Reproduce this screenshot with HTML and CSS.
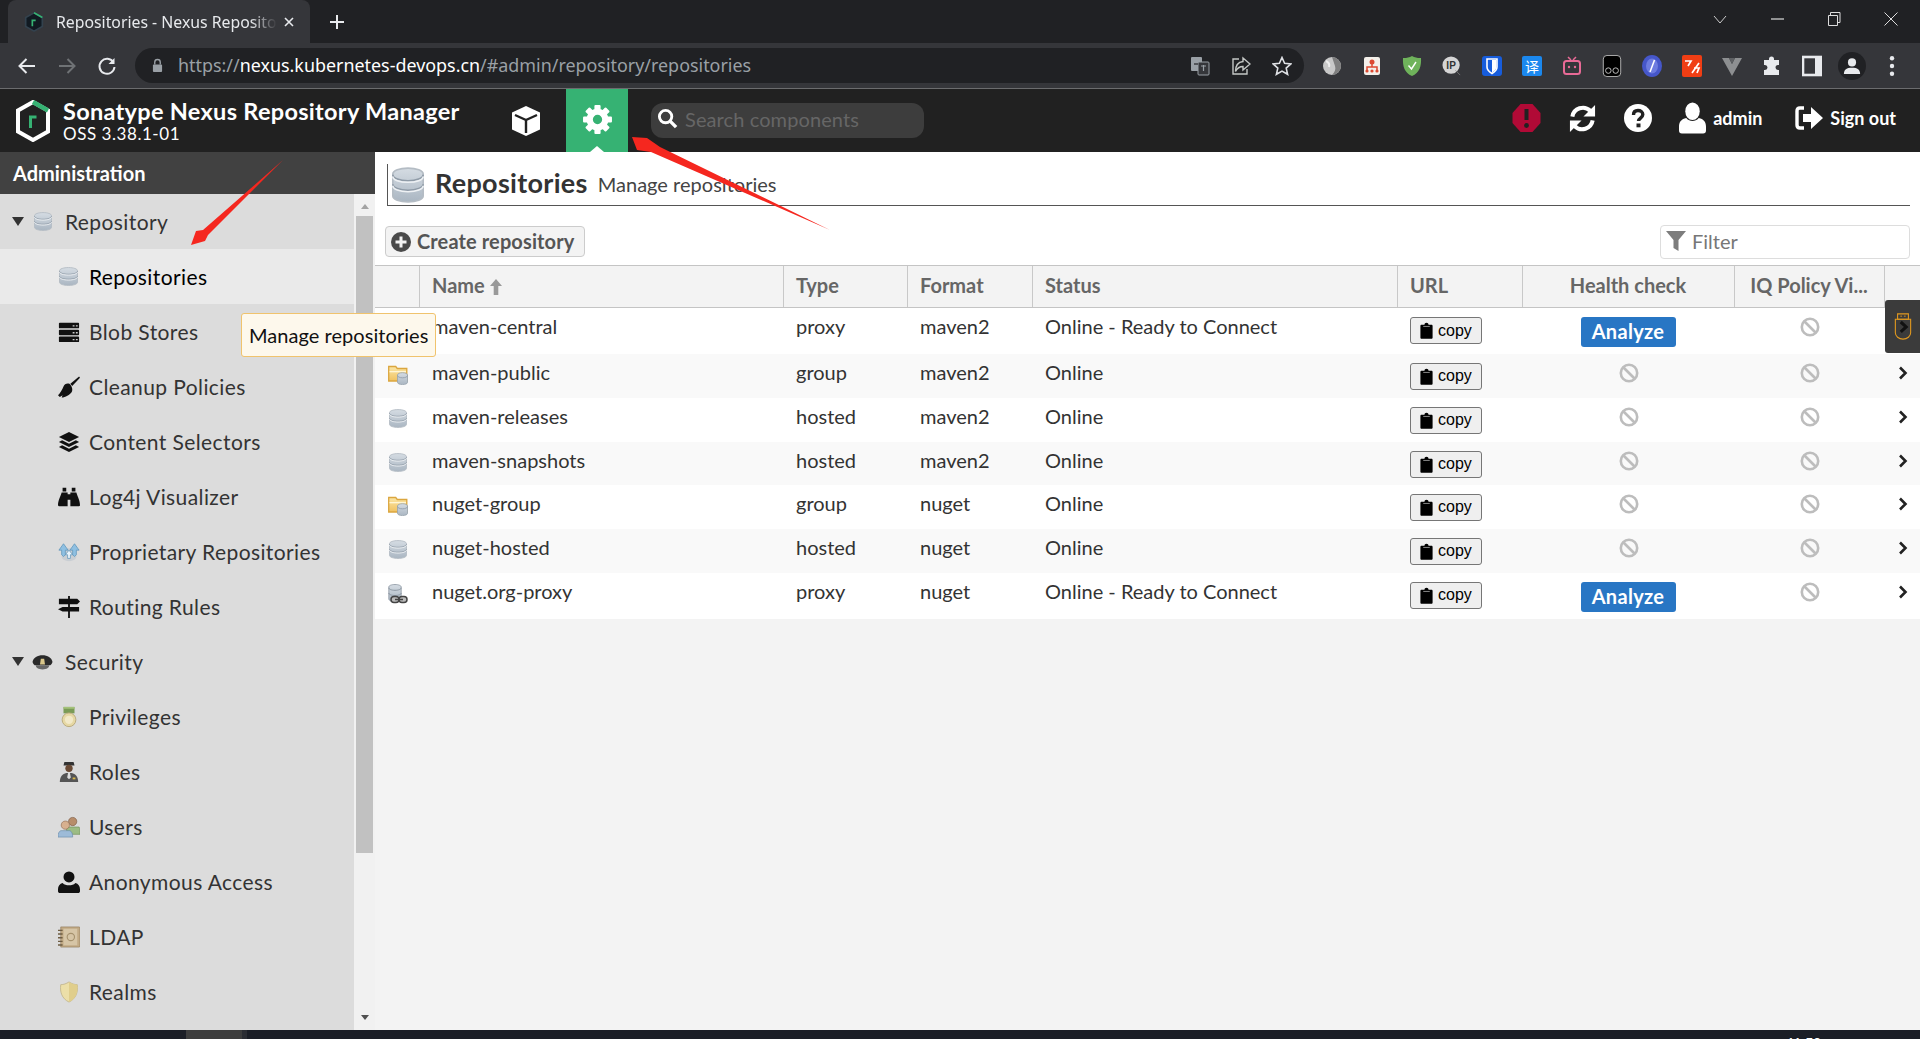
FILE: index.html
```html
<!DOCTYPE html>
<html lang="en">
<head>
<meta charset="utf-8">
<title>Repositories - Nexus Repository Manager</title>
<link rel="stylesheet" href="styles.css">
</head>
<body>
<svg class="defs" aria-hidden="true">
  <defs>
    <linearGradient id="gdb" x1="0" x2="0" y1="0" y2="1"><stop offset="0" stop-color="#d5dce3"/><stop offset="1" stop-color="#aab6c2"/></linearGradient>
    <linearGradient id="gfolder" x1="0" x2="0" y1="0" y2="1"><stop offset="0" stop-color="#fbe6a6"/><stop offset="1" stop-color="#f0c261"/></linearGradient>
    <symbol id="i-db" viewBox="2.500 .5 19 23" preserveAspectRatio="none">
      <path d="M3 5c0-2.200 4-3.800 9-3.800s9 1.600 9 3.800v14c0 2.200-4 3.800-9 3.800s-9-1.600-9-3.800z" fill="url(#gdb)" stroke="#b4bcc4"/>
      <path d="M3 5.500c0 2.200 4 3.800 9 3.800s9-1.600 9-3.800M3 11.500c0 2.200 4 3.800 9 3.800s9-1.600 9-3.800" fill="none" stroke="#8f9ba7" stroke-width="1"/>
      <path d="M3 6.500c0 2.200 4 3.800 9 3.800s9-1.600 9-3.800M3 12.500c0 2.200 4 3.800 9 3.800s9-1.600 9-3.800" fill="none" stroke="#eef1f4" stroke-width="1"/>
    </symbol>
    <symbol id="i-group" viewBox="0 0 20 20">
      <path d="M.7 1.500h7l1.600 2h9.500v12.500H.7z" fill="url(#gfolder)" stroke="#dba63f" stroke-width="1.300"/>
      <path d="M1.500 6h16.500v1.300H1.500z" fill="#fff6d5"/>
      <path d="M9.500 10c0-1.300 2.200-2.300 5-2.300s5 1 5 2.300v7.300c0 1.300-2.200 2.300-5 2.300s-5-1-5-2.300z" fill="url(#gdb)" stroke="#97a3ae" stroke-width=".8"/>
      <path d="M9.500 10.500c0 1.300 2.200 2.300 5 2.300s5-1 5-2.300" fill="none" stroke="#8f9ba7" stroke-width=".8"/>
    </symbol>
    <symbol id="i-proxy" viewBox="0 0 20 20">
      <path d="M.8 3c0-1.500 2.700-2.500 6.200-2.500s6.200 1 6.200 2.500v12c0 1.500-2.700 2.500-6.200 2.500S.8 16.500.8 15z" fill="url(#gdb)" stroke="#8b96a1" stroke-width=".8"/>
      <path d="M.8 3.800c0 1.500 2.700 2.500 6.200 2.500s6.200-1 6.200-2.500M.8 9c0 1.500 2.700 2.500 6.200 2.500s6.200-1 6.200-2.500" fill="none" stroke="#7f8a95" stroke-width=".8"/>
      <rect x="3" y="12.500" width="8" height="6" rx="3" fill="#bbb" stroke="#444" stroke-width="1.500"/>
      <rect x="11" y="12.500" width="8" height="6" rx="3" fill="#bbb" stroke="#444" stroke-width="1.500"/>
      <path d="M7 15.500h8" stroke="#444" stroke-width="1.500"/>
    </symbol>
    <symbol id="i-blob" viewBox="0 0 24 24">
      <rect x="1" y="2" width="22" height="6" rx="1"/><rect x="1" y="9.500" width="22" height="6" rx="1"/><rect x="1" y="17" width="22" height="6" rx="1"/>
      <path d="M16 4.500h2v1.500h-2zM19.500 4.500h2v1.500h-2zM16 12h2v1.500h-2zM19.500 12h2v1.500h-2zM16 19.500h2V21h-2zM19.500 19.500h2V21h-2z" fill="#ccc"/>
    </symbol>
    <symbol id="i-broom" viewBox="0 0 24 24">
      <path d="M23 .5 13.500 8.500l2 2.500 8.500-9z"/>
      <path d="M12.500 8.500c-3-1-5.500.5-6.500 3-1.500 4-3.500 7-6 9.500l2 2 3-2-1 2.500c4 0 9-3 11-6 1.500-2.500 0-7-2.500-9z"/>
    </symbol>
    <symbol id="i-layers" viewBox="0 0 24 24">
      <path d="M12 1 1 6.500 12 12l11-5.500z"/>
      <path d="M4.500 10 1 12l11 5.500L23 12l-3.500-2-7.500 3.800z"/>
      <path d="M4.500 15.500 1 17.500 12 23l11-5.500-3.500-2-7.500 3.800z"/>
    </symbol>
    <symbol id="i-binoc" viewBox="0 0 24 24">
      <path d="M5 2h4v4H5zM15 2h4v4h-4z"/>
      <path d="M4 7h6.500v15H1c-.5 0-1-.5-1-1 0-5 2-8 4-14zM20 7h-6.500v15H23c.5 0 1-.5 1-1 0-5-2-8-4-14zM10.500 9h3v6h-3z"/>
    </symbol>
    <symbol id="i-prop" viewBox="0 0 24 24">
      <path d="M4 17c0 3 3.500 5 8 5s8-2 8-5V8H4z" fill="#c9ced3"/>
      <path d="M1 10 6 3l5 7H8v5l-2 2-2-2v-5z" fill="#8fc0e2" stroke="#5b93b9" stroke-width=".8"/>
      <path d="M23 10 18 3l-5 7h3v5l2 2 2-2v-5z" fill="#8fc0e2" stroke="#5b93b9" stroke-width=".8"/>
      <path d="M12 10l-4 5h2.500v4h3v-4H16z" fill="#eaf4fb" stroke="#5b93b9" stroke-width=".8"/>
    </symbol>
    <symbol id="i-sign" viewBox="0 0 24 24">
      <path d="M11 0h2v3h8l3 3-3 3h-8v3h10v5H5l-5-2.500L5 12h6V9H1V3h10zM11 17h2v7h-2z"/>
    </symbol>
    <symbol id="i-hat" viewBox="0 0 24 24">
      <path d="M12 4C6 4 1 7 0 12c1 3 2 4 4 4h16c2 0 3-1 4-4-1-5-6-8-12-8z" fill="#2a2a2a"/>
      <path d="M4 16h16c0 3-3 5-8 5s-8-2-8-5z" fill="#666"/>
      <path d="M10 8h4l1 7H9z" fill="#d9c68a"/>
    </symbol>
    <symbol id="i-medal" viewBox="0 0 24 24">
      <path d="M6 1h12v7H6z" fill="#7a9b56"/><path d="M6 1h12v2H6z" fill="#a4c27a"/>
      <circle cx="12" cy="15" r="7.500" fill="#e6d8a4" stroke="#b8a878"/><circle cx="12" cy="15" r="4.500" fill="#f2e9c8"/>
    </symbol>
    <symbol id="i-police" viewBox="0 0 24 24">
      <path d="M7 1h10l1 4H6z" fill="#333"/><circle cx="12" cy="8" r="4" fill="#6a4a35"/>
      <path d="M2 23c0-6 3-9 7-10h6c4 1 7 4 7 10z" fill="#555"/><path d="M11 13h2l1 5-2 2-2-2z" fill="#ddd"/><path d="M16 18h3v2h-3z" fill="#d9b84a"/>
    </symbol>
    <symbol id="i-users" viewBox="0 0 24 24">
      <circle cx="16" cy="6" r="4.500" fill="#b78d6b" stroke="#7c5b43" stroke-width=".7"/><path d="M9 12h14c1 1 1 6 1 8H10z" fill="#9cbc84" stroke="#6f8e57" stroke-width=".7"/>
      <circle cx="8" cy="10" r="4.500" fill="#d7b08f" stroke="#8e6c52" stroke-width=".7"/><path d="M0 23c0-4 1-6 3-7h10c2 1 3 3 3 7z" fill="#9dbbd8" stroke="#688aab" stroke-width=".7"/>
    </symbol>
    <symbol id="i-person" viewBox="0 0 24 24">
      <circle cx="12" cy="6.500" r="6"/><path d="M5 13c2 2 4 2.500 7 2.500s5-.5 7-2.500c3 1 5 3 5 7v2c0 1-1 2-2 2H2c-1 0-2-1-2-2v-2c0-4 2-6 5-7z"/>
    </symbol>
    <symbol id="i-book" viewBox="0 0 24 24">
      <path d="M3 1h20c.5 0 1 .5 1 1v20c0 .5-.5 1-1 1H3z" fill="#c2ab86" stroke="#8e7957" stroke-width=".7"/>
      <path d="M6 3h15v18H6z" fill="#d6c5a6"/>
      <path d="M0 4h5v1.500H0zM0 8h5v1.500H0zM0 12h5v1.500H0zM0 16h5v1.500H0zM0 20h5v1.500H0z" fill="#6e5d43"/>
      <circle cx="14" cy="12" r="4" fill="none" stroke="#a5916d" stroke-width="1.200"/>
    </symbol>
    <symbol id="i-shield" viewBox="0 0 24 24">
      <path d="M12 1c3 2 6 3 9 3 1 8-1 15-9 19C4 19 2 12 3 4c3 0 6-1 9-3z" fill="#ecdfa8" stroke="#c4b88f"/>
      <path d="M12 1v22c8-4 10-11 9-19-3 0-6-1-9-3z" fill="#e0ce8c"/>
    </symbol>
    <symbol id="i-clip" viewBox="0 0 16 20">
      <path d="M2 3h3.500c0-1.500 1-2.500 2.500-2.500s2.500 1 2.500 2.500H14c1 0 1.500.7 1.500 1.500v14c0 1-.5 1.500-1.500 1.500H2c-1 0-1.500-.5-1.500-1.500v-14C.5 3.700 1 3 2 3z" fill="#000"/>
      <path d="M4 5h8" stroke="#888" stroke-width="1.200"/>
    </symbol>
    <symbol id="i-ban" viewBox="0 0 20 20">
      <circle cx="10" cy="10" r="8.200" fill="none" stroke="#bdbdbd" stroke-width="2.600"/>
      <path d="M4.500 4.500l11 11" stroke="#bdbdbd" stroke-width="2.600"/>
    </symbol>
    <symbol id="i-chev" viewBox="0 0 10 14">
      <path d="M2 1.500 7.500 7 2 12.500" fill="none" stroke="#222" stroke-width="2.600"/>
    </symbol>
  </defs>
</svg>

<div class="tabstrip">
  <div class="tab">
    <svg class="favicon" viewBox="0 0 24 24"><path d="M12 1 22 6.500v11L12 23 2 17.500v-11z" fill="#111a22" stroke="#33424e" stroke-width="2"/><path d="M12 1 22 6.500" stroke="#36b273" stroke-width="2"/><path d="M10 17v-7h4" fill="none" stroke="#36b273" stroke-width="2"/></svg>
    <span class="tab-title">Repositories - Nexus Repositor</span>
    <svg class="tab-x" viewBox="0 0 12 12"><path d="M2 2l8 8M10 2l-8 8" stroke="#e8eaed" stroke-width="1.600"/></svg>
  </div>
  <svg class="tab-plus" viewBox="0 0 16 16"><path d="M8 1v14M1 8h14" stroke="#e8eaed" stroke-width="2"/></svg>
  <div class="winctl">
    <svg viewBox="0 0 14 14"><path d="M1 4l6 7 6-7" fill="none" stroke="#ccc"/></svg>
    <svg viewBox="0 0 14 14"><path d="M1 7h13" stroke="#ddd" stroke-width="1.200"/></svg>
    <svg viewBox="0 0 14 14"><path d="M1.500 3.500h9v10h-9zM3.500 3.500V.5h9.500v10h-2.500" fill="none" stroke="#ddd"/></svg>
    <svg viewBox="0 0 14 14"><path d="M.5.500l13 13M13.500.500l-13 13" stroke="#ddd" stroke-width="1"/></svg>
  </div>
</div>

<div class="toolbar">
  <div class="navbtn"><svg viewBox="0 0 20 20"><path d="M18 10H3M9.500 3 2.500 10l7 7" fill="none" stroke="#e8eaed" stroke-width="2"/></svg></div>
  <div class="navbtn"><svg viewBox="0 0 20 20"><path d="M2 10h15M10.500 3l7 7-7 7" fill="none" stroke="#6f7275" stroke-width="2"/></svg></div>
  <div class="navbtn"><svg viewBox="0 0 20 20"><path d="M16.500 6.500A7.500 7.500 0 1 0 17.500 11" fill="none" stroke="#e8eaed" stroke-width="2"/><path d="M17.500 2v6h-6z" fill="#e8eaed"/></svg></div>
  <div class="omnibox">
    <svg class="lock" viewBox="0 0 12 16"><path d="M3 7V4.500a3 3 0 0 1 6 0V7" fill="none" stroke="#9aa0a6" stroke-width="1.500"/><rect x="1" y="7" width="10" height="8" rx="1" fill="#9aa0a6"/></svg>
    <span class="url"><span class="url-dim">https://</span>nexus.kubernetes-devops.cn<span class="url-dim">/#admin/repository/repositories</span></span>
    <svg class="omni-i" viewBox="0 0 20 20"><rect x="1" y="1" width="11" height="14" rx="1" fill="#9aa0a6"/><rect x="8" y="6" width="11" height="13" rx="1" fill="#35363a" stroke="#9aa0a6"/><path d="M4 8h4" stroke="#35363a" stroke-width="1.400"/><path d="M11 10h5M13.500 9v6" stroke="#9aa0a6" stroke-width="1.200"/></svg>
    <svg class="omni-i" viewBox="0 0 20 20"><path d="M8 3H2v15h14v-5" fill="none" stroke="#c4c7c5" stroke-width="1.400"/><path d="M12 2l7 6-7 6v-3.500c-4 0-6 2-7.500 5 0-6 3-9.500 7.500-10z" fill="none" stroke="#c4c7c5" stroke-width="1.400"/></svg>
    <svg class="omni-i" viewBox="0 0 20 20"><path d="M10 1.500l2.600 5.800 6.300.6-4.700 4.200 1.400 6.200L10 15.100l-5.600 3.200 1.400-6.200L1.100 7.900l6.300-.6z" fill="none" stroke="#dfe1e5" stroke-width="1.600"/></svg>
  </div>
  <div class="exts">
    <div class="ext"><svg viewBox="0 0 20 20"><circle cx="10" cy="10" r="9" fill="#c8c8c8"/><path d="M10 1a9 9 0 0 1 0 18c3-3 4-6 3-9S11 4 10 1z" fill="#7e7e7e"/><path d="M4 5c2 1 4 3 3 6" stroke="#eee" fill="none" stroke-width="2"/></svg></div>
    <div class="ext"><svg viewBox="0 0 20 20"><rect x="2" y="1" width="16" height="18" rx="2" fill="#f4f0ea"/><circle cx="10" cy="6" r="2.500" fill="#dc4a32"/><path d="M10 8v3M5 15v-4h10v4" fill="none" stroke="#dc4a32" stroke-width="1.500"/><circle cx="5" cy="15" r="1.600" fill="#dc4a32"/><circle cx="10" cy="15" r="1.600" fill="#dc4a32"/><circle cx="15" cy="15" r="1.600" fill="#dc4a32"/></svg></div>
    <div class="ext"><svg viewBox="0 0 20 22"><path d="M10 1c3 1.500 6 2.200 9 2 .5 8-1.500 15-9 18C2.500 18 .5 11 1 3c3 .2 6-.5 9-2z" fill="#6fb35b"/><path d="M6.500 10.500 9.500 14l4.500-7" fill="none" stroke="#fff" stroke-width="1.400"/></svg></div>
    <div class="ext"><svg viewBox="0 0 22 22"><circle cx="10" cy="10" r="9.500" fill="#d5d5d5"/><text x="10" y="14.500" class="ext-ip">IP</text><path d="M15 16l5 5" stroke="#777" stroke-width="1"/></svg></div>
    <div class="ext"><svg viewBox="0 0 20 20"><rect width="20" height="20" rx="3" fill="#175ddc"/><path d="M5 3h10v8c0 3-2.500 5-5 6.500C7.500 16 5 14 5 11z" fill="none" stroke="#fff" stroke-width="1.600"/><path d="M10 4v12.500c2-1.300 4.300-3 4.300-5.500V4z" fill="#fff"/></svg></div>
    <div class="ext"><svg viewBox="0 0 20 20"><rect width="20" height="20" rx="2" fill="#1b88ee"/><text x="10" y="15.500" class="ext-yi">译</text></svg></div>
    <div class="ext"><svg viewBox="0 0 20 20"><path d="M6 1l3 3M14 1l-3 3" stroke="#e86a96" stroke-width="1.500"/><rect x="2" y="5" width="16" height="13" rx="2.500" fill="none" stroke="#e86a96" stroke-width="2"/><circle cx="7" cy="11" r="1.200" fill="#e86a96"/><circle cx="13" cy="11" r="1.200" fill="#e86a96"/></svg></div>
    <div class="ext"><svg viewBox="0 0 20 24"><rect x=".5" y=".5" width="19" height="23" rx="4" fill="#000" stroke="#bbb"/><circle cx="6" cy="17" r="3" fill="none" stroke="#ccc"/><circle cx="14" cy="17" r="3" fill="none" stroke="#ccc"/></svg></div>
    <div class="ext"><svg viewBox="0 0 20 22"><ellipse cx="10" cy="11" rx="10" ry="11" fill="#4657ca"/><ellipse cx="10" cy="11" rx="6" ry="7.500" fill="#6d7ce0"/><path d="M12.500 5 8 17" stroke="#fff" stroke-width="1.600"/></svg></div>
    <div class="ext"><svg viewBox="0 0 20 22"><rect width="20" height="22" rx="2" fill="#f03e14"/><path d="M3 6h6l-3 5M17 8l-7 10M12 13h5l-2 5" fill="none" stroke="#fff" stroke-width="1.700"/></svg></div>
    <div class="ext"><svg viewBox="0 0 20 20"><path d="M0 2h7l3 6 3-6h7L10 20z" fill="#8d8f91"/><path d="M7 2h6l-3 6z" fill="#5e6063"/></svg></div>
    <div class="ext"><svg viewBox="0 0 20 20"><path d="M7 4V3a2.500 2.500 0 0 1 5 0v1h5v5h-1a2.500 2.500 0 0 0 0 5h1v5H2v-5h1a2.500 2.500 0 0 0 0-5H2V4z" fill="#e8eaed"/></svg></div>
    <div class="ext"><svg viewBox="0 0 20 20"><rect x="1" y="1" width="18" height="18" fill="none" stroke="#e8eaed" stroke-width="2.600"/><rect x="13" y="1" width="6" height="18" fill="#e8eaed"/></svg></div>
    <div class="avatar"><svg viewBox="0 0 20 20"><circle cx="10" cy="6" r="4.500" fill="#e8eaed"/><path d="M1 19c0-5 3-7 9-7s9 2 9 7z" fill="#e8eaed"/></svg></div>
    <div class="ext"><svg viewBox="0 0 6 20"><circle cx="3" cy="3" r="2" fill="#e8eaed"/><circle cx="3" cy="10" r="2" fill="#e8eaed"/><circle cx="3" cy="17" r="2" fill="#e8eaed"/></svg></div>
  </div>
</div>

<header class="apphead">
  <svg class="logo" viewBox="0 0 36 42"><path d="M18 2 33 10.500v21L18 40 3 31.500v-21z" fill="none" stroke="#fff" stroke-width="4"/><path d="M18 2 33 10.500" stroke="#36b273" stroke-width="4.500"/><path d="M15.500 28V17h6" fill="none" stroke="#36b273" stroke-width="3"/></svg>
  <div class="brand">
    <div class="brand-name">Sonatype Nexus Repository Manager</div>
    <div class="brand-ver">OSS 3.38.1-01</div>
  </div>
  <svg class="cube" viewBox="0 0 32 32"><path d="M16 1 30 7.500v17L16 31 2 24.500v-17z" fill="#fff"/><path d="M5 10l11 5 11-5M16 15v13" fill="none" stroke="#212121" stroke-width="2.400"/></svg>
  <div class="geartab">
    <svg class="gear" viewBox="0 0 30 30">
      <circle cx="15" cy="15" r="7.500" fill="none" stroke="#fff" stroke-width="6"/>
      <g fill="#fff"><rect x="12" y="1" width="6" height="6" rx="1"/><rect x="12" y="23" width="6" height="6" rx="1"/><rect x="1" y="12" width="6" height="6" rx="1"/><rect x="23" y="12" width="6" height="6" rx="1"/><rect x="12" y="1" width="6" height="6" rx="1" transform="rotate(45 15 15)"/><rect x="12" y="1" width="6" height="6" rx="1" transform="rotate(135 15 15)"/><rect x="12" y="1" width="6" height="6" rx="1" transform="rotate(225 15 15)"/><rect x="12" y="1" width="6" height="6" rx="1" transform="rotate(315 15 15)"/></g>
    </svg>
    <span class="notch"></span>
  </div>
  <div class="search">
    <svg class="search-i" viewBox="0 0 22 22"><circle cx="9" cy="9" r="6.500" fill="none" stroke="#fff" stroke-width="3"/><path d="M13.500 13.500 20 20" stroke="#fff" stroke-width="3.600"/></svg>
    <span class="search-ph">Search components</span>
  </div>
  <div class="headright">
    <svg class="h-alert" viewBox="0 0 28 30"><path d="M8 1h12l8 9v10l-8 9H8l-8-9V10z" fill="#b10a36"/><path d="M14 6v11" stroke="#212121" stroke-width="4"/><circle cx="14" cy="22.500" r="2.400" fill="#212121"/></svg>
    <svg class="h-refresh" viewBox="0 0 30 30"><path d="M4.500 13A11 11 0 0 1 23 7l2.500 3" fill="none" stroke="#fff" stroke-width="4.200"/><path d="M28 1v12H16z" fill="#fff"/><path d="M25.500 17A11 11 0 0 1 7 23l-2.500-3" fill="none" stroke="#fff" stroke-width="4.200"/><path d="M2 29V17h12z" fill="#fff"/></svg>
    <svg class="h-help" viewBox="0 0 28 28"><circle cx="14" cy="14" r="14" fill="#fff"/><path d="M9.500 11c0-3 2-4.500 4.500-4.500s4.800 1.500 4.800 4c0 3.500-4.300 3.500-4.300 6.500" fill="none" stroke="#212121" stroke-width="3.400"/><rect x="12.500" y="19.500" width="4" height="3.800" fill="#212121"/></svg>
    <div class="h-pair">
      <svg class="h-user" viewBox="0 0 28 32"><ellipse cx="14" cy="9" rx="7.500" ry="9" fill="#fff"/><path d="M7.500 16c2 2.500 4 3 6.500 3s4.500-.5 6.500-3c5 1 7.500 4 7.500 9v4c0 2-1 3-3 3H3c-2 0-3-1-3-3v-4c0-5 2.500-8 7.500-9z" fill="#fff"/></svg>
      <span class="h-label">admin</span>
    </div>
    <div class="h-pair h-signout">
      <svg class="h-out" viewBox="0 0 28 26"><path d="M9 3H5C3 3 2 4 2 6v14c0 2 1 3 3 3h4" fill="none" stroke="#fff" stroke-width="3.400"/><path d="M8 9h8V2l12 11-12 11v-7H8z" fill="#fff"/></svg>
      <span class="h-label">Sign out</span>
    </div>
  </div>
</header>

<div class="workspace">
  <aside class="side">
    <div class="side-title">Administration</div>
    <div class="side-body">
      <ul class="tree">
        <li class="node parent"><span class="caret"></span><svg class="ico ico-db"><use href="#i-db"/></svg><span>Repository</span></li>
        <li class="node child active"><svg class="ico ico-db"><use href="#i-db"/></svg><span>Repositories</span></li>
        <li class="node child"><svg class="ico"><use href="#i-blob"/></svg><span>Blob Stores</span></li>
        <li class="node child"><svg class="ico"><use href="#i-broom"/></svg><span>Cleanup Policies</span></li>
        <li class="node child"><svg class="ico"><use href="#i-layers"/></svg><span>Content Selectors</span></li>
        <li class="node child"><svg class="ico"><use href="#i-binoc"/></svg><span>Log4j Visualizer</span></li>
        <li class="node child"><svg class="ico"><use href="#i-prop"/></svg><span>Proprietary Repositories</span></li>
        <li class="node child"><svg class="ico"><use href="#i-sign"/></svg><span>Routing Rules</span></li>
        <li class="node parent"><span class="caret"></span><svg class="ico"><use href="#i-hat"/></svg><span>Security</span></li>
        <li class="node child"><svg class="ico"><use href="#i-medal"/></svg><span>Privileges</span></li>
        <li class="node child"><svg class="ico"><use href="#i-police"/></svg><span>Roles</span></li>
        <li class="node child"><svg class="ico"><use href="#i-users"/></svg><span>Users</span></li>
        <li class="node child"><svg class="ico"><use href="#i-person"/></svg><span>Anonymous Access</span></li>
        <li class="node child"><svg class="ico"><use href="#i-book"/></svg><span>LDAP</span></li>
        <li class="node child"><svg class="ico"><use href="#i-shield"/></svg><span>Realms</span></li>
      </ul>
      <div class="vscroll">
        <span class="sb-up"></span>
        <span class="sb-thumb"></span>
        <span class="sb-down"></span>
      </div>
    </div>
  </aside>

  <main class="content">
    <div class="panel-top">
      <div class="page-head">
        <svg class="page-ico"><use href="#i-db"/></svg>
        <h1 class="page-title">Repositories</h1>
        <span class="page-sub">Manage repositories</span>
      </div>
      <div class="actions">
        <button class="create" type="button">
          <svg class="create-i" viewBox="0 0 20 20"><circle cx="10" cy="10" r="10" fill="#4a4a4a"/><path d="M10 4.500v11M4.500 10h11" stroke="#f3f3f3" stroke-width="3"/></svg>
          <span class="create-t">Create repository</span>
        </button>
        <div class="filter">
          <svg class="filter-i" viewBox="0 0 20 22"><path d="M0 1h20l-7.500 9v11l-5-3v-8z" fill="#7d7d7d"/></svg>
          <span class="filter-ph">Filter</span>
        </div>
      </div>
    </div>
    <table class="grid">
      <colgroup>
        <col class="c-ico"><col class="c-name"><col class="c-type"><col class="c-format"><col class="c-status"><col class="c-url"><col class="c-health"><col class="c-iq"><col class="c-go">
      </colgroup>
      <thead>
        <tr>
          <th></th>
          <th>Name <svg class="sort" viewBox="0 0 12 16"><path d="M6 0l6 7H8.300v9H3.700V7H0z" fill="#999"/></svg></th>
          <th>Type</th><th>Format</th><th>Status</th><th>URL</th>
          <th class="ctr">Health check</th><th class="ctr">IQ Policy Vi...</th><th></th>
        </tr>
      </thead>
      <tbody>
        <tr class="tall"><td><svg class="rowico"><use href="#i-proxy"/></svg></td><td>maven-central</td><td>proxy</td><td>maven2</td><td>Online - Ready to Connect</td>
          <td><button class="copy" type="button"><svg class="clip"><use href="#i-clip"/></svg>copy</button></td><td class="ctr"><button class="analyze" type="button">Analyze</button></td><td class="ctr"><svg class="ban"><use href="#i-ban"/></svg></td><td class="ctr"><svg class="chev"><use href="#i-chev"/></svg></td></tr>
        <tr><td><svg class="rowico"><use href="#i-group"/></svg></td><td>maven-public</td><td>group</td><td>maven2</td><td>Online</td>
          <td><button class="copy" type="button"><svg class="clip"><use href="#i-clip"/></svg>copy</button></td><td class="ctr"><svg class="ban"><use href="#i-ban"/></svg></td><td class="ctr"><svg class="ban"><use href="#i-ban"/></svg></td><td class="ctr"><svg class="chev"><use href="#i-chev"/></svg></td></tr>
        <tr><td><svg class="rowico rowdb"><use href="#i-db"/></svg></td><td>maven-releases</td><td>hosted</td><td>maven2</td><td>Online</td>
          <td><button class="copy" type="button"><svg class="clip"><use href="#i-clip"/></svg>copy</button></td><td class="ctr"><svg class="ban"><use href="#i-ban"/></svg></td><td class="ctr"><svg class="ban"><use href="#i-ban"/></svg></td><td class="ctr"><svg class="chev"><use href="#i-chev"/></svg></td></tr>
        <tr class="short"><td><svg class="rowico rowdb"><use href="#i-db"/></svg></td><td>maven-snapshots</td><td>hosted</td><td>maven2</td><td>Online</td>
          <td><button class="copy" type="button"><svg class="clip"><use href="#i-clip"/></svg>copy</button></td><td class="ctr"><svg class="ban"><use href="#i-ban"/></svg></td><td class="ctr"><svg class="ban"><use href="#i-ban"/></svg></td><td class="ctr"><svg class="chev"><use href="#i-chev"/></svg></td></tr>
        <tr><td><svg class="rowico"><use href="#i-group"/></svg></td><td>nuget-group</td><td>group</td><td>nuget</td><td>Online</td>
          <td><button class="copy" type="button"><svg class="clip"><use href="#i-clip"/></svg>copy</button></td><td class="ctr"><svg class="ban"><use href="#i-ban"/></svg></td><td class="ctr"><svg class="ban"><use href="#i-ban"/></svg></td><td class="ctr"><svg class="chev"><use href="#i-chev"/></svg></td></tr>
        <tr><td><svg class="rowico rowdb"><use href="#i-db"/></svg></td><td>nuget-hosted</td><td>hosted</td><td>nuget</td><td>Online</td>
          <td><button class="copy" type="button"><svg class="clip"><use href="#i-clip"/></svg>copy</button></td><td class="ctr"><svg class="ban"><use href="#i-ban"/></svg></td><td class="ctr"><svg class="ban"><use href="#i-ban"/></svg></td><td class="ctr"><svg class="chev"><use href="#i-chev"/></svg></td></tr>
        <tr class="tall"><td><svg class="rowico"><use href="#i-proxy"/></svg></td><td>nuget.org-proxy</td><td>proxy</td><td>nuget</td><td>Online - Ready to Connect</td>
          <td><button class="copy" type="button"><svg class="clip"><use href="#i-clip"/></svg>copy</button></td><td class="ctr"><button class="analyze" type="button">Analyze</button></td><td class="ctr"><svg class="ban"><use href="#i-ban"/></svg></td><td class="ctr"><svg class="chev"><use href="#i-chev"/></svg></td></tr>
      </tbody>
    </table>
  </main>
</div>

<div class="taskbar">
  <span class="task-a"></span><span class="task-b"></span>
  <span class="clock">11:50</span>
</div>

<div class="tooltip">Manage repositories</div>
<div class="usbwidget"><svg viewBox="0 0 20 30"><path d="M4 1h12v6H4z" fill="none" stroke="#e39a1f" stroke-width="1.200"/><path d="M1.500 7h17v15a8.500 7 0 0 1-17 0z" fill="none" stroke="#e39a1f" stroke-width="1.200"/><path d="M7 3.500h2M11 3.500h2" stroke="#e39a1f"/><path d="M7.500 10l6 5.500-6 5.500" fill="none" stroke="#111" stroke-width="3.400"/></svg></div>
<svg class="marks" viewBox="0 0 1920 1039" aria-hidden="true">
  <polygon points="283,160 208,235 205,241 191,245 196,231 203,230" fill="#f5271f"/>
  <polygon points="830,230 660,147 647,138 632,137 637,150 651,152" fill="#f5271f"/>
</svg>
</body>
</html>
```

FILE: styles.css
```css
* { box-sizing: border-box; }
html, body { margin: 0; height: 100%; overflow: hidden; }
body { font-family: "Lato", "Liberation Sans", sans-serif; color: #333; background: #f3f3f3; width: 1920px; height: 1039px; position: relative; }
ul { list-style: none; margin: 0; padding: 0; }
button { font: inherit; cursor: default; }
svg { display: block; flex: none; }
.defs { width: 0; height: 0; overflow: hidden; }

/* browser chrome */
.tabstrip { height: 43px; background: #202124; display: flex; align-items: flex-start; padding-left: 8px; }
.tab { width: 302px; height: 43px; background: #35363a; border-radius: 8px 8px 0 0; display: flex; align-items: center; padding: 0 14px 0 16px; color: #e8eaed; }
.favicon { width: 20px; height: 24px; margin-right: 12px; }
.tab-title { font: 15.800px "Noto Sans", sans-serif; white-space: nowrap; width: 221px; flex: none; -webkit-mask-image: linear-gradient(to right, #000 88%, transparent 100%); mask-image: linear-gradient(to right, #000 88%, transparent 100%); }
.tab-x { width: 12px; height: 12px; margin-left: 6px; }
.tab-plus { width: 16px; height: 16px; margin: 14px 0 0 19px; }
.winctl { margin-left: auto; display: flex; gap: 43px; padding: 12px 22px 0 0; }
.winctl svg { width: 14px; height: 14px; }

.toolbar { height: 46px; background: #35363a; border-bottom: 1px solid #6b6c6e; display: flex; align-items: flex-start; padding: 5px 8px 0 7px; }
.navbtn { width: 40px; height: 35px; display: flex; align-items: center; justify-content: center; }
.navbtn svg { width: 20px; height: 20px; }
.omnibox { flex: 1; height: 35px; margin: 0 8px; background: #202124; border-radius: 18px; display: flex; align-items: center; padding: 0 12px 0 17px; }
.lock { width: 11px; height: 15px; margin-right: 15px; }
.url { flex: 1; font: 17.900px "Noto Sans", sans-serif; color: #fff; white-space: nowrap; padding-bottom: 2px; }
.url-dim { color: #9aa0a6; }
.omni-i { width: 20px; height: 20px; margin-left: 21px; }
.exts { display: flex; }
.ext { width: 40px; height: 35px; display: flex; align-items: center; justify-content: center; }
.ext svg { width: 20px; height: 22px; }
.ext-ip { font: bold 11px "Liberation Sans", sans-serif; fill: #333; text-anchor: middle; }
.ext-yi { font: 14px "Noto Sans CJK SC", sans-serif; fill: #fff; text-anchor: middle; }
.avatar { width: 28px; height: 28px; margin: 4px 6px 0; border-radius: 50%; background: #202124; display: flex; align-items: center; justify-content: center; }
.avatar svg { width: 18px; height: 18px; }

/* nexus header */
.apphead { height: 63px; background: #212121; display: flex; align-items: center; padding-left: 15px; color: #fff; }
.logo { width: 36px; height: 42px; }
.brand { width: 447px; margin-left: 12px; }
.brand-name { font-size: 23.500px; font-weight: 700; line-height: 28px; letter-spacing: .3px; margin-top: -1px; }
.brand-ver { font-size: 17px; line-height: 18px; letter-spacing: .55px; }
.cube { width: 32px; height: 32px; }
.geartab { position: relative; width: 62px; height: 63px; margin-left: 24px; background: #36b273; display: flex; align-items: center; justify-content: center; padding-bottom: 2px; }
.gear { width: 31px; height: 31px; }
.notch { position: absolute; left: 24px; bottom: 0; border: 7px solid transparent; border-top: 0; border-bottom: 6px solid #fff; }
.search { width: 273px; height: 35px; margin-left: 23px; background: #3d3d3d; border-radius: 12px; display: flex; align-items: center; padding: 0 0 4px 6px; }
.search-i { width: 21px; height: 21px; }
.search-ph { margin-left: 7px; font-size: 20px; color: #666; letter-spacing: .1px; }
.headright { margin-left: auto; display: flex; align-items: center; gap: 27px; padding: 0 24px 5px 0; }
.h-pair { display: flex; align-items: center; gap: 7px; }
.h-signout { margin-left: 6px; }
.h-alert { width: 29px; height: 30px; }
.h-refresh { width: 29px; height: 29px; }
.h-help { width: 28px; height: 28px; }
.h-user { width: 27px; height: 32px; }
.h-out { width: 28px; height: 26px; }
.h-label { font-size: 18px; font-weight: 700; }

/* layout */
.workspace { height: 878px; display: flex; }
.side { width: 375px; display: flex; flex-direction: column; }
.side-title { height: 42px; background: #414141; color: #fff; font-weight: 700; font-size: 20px; line-height: 42px; padding-left: 13px; }
.side-body { flex: 1; display: flex; min-height: 0; }
.tree { width: 354px; background: #dcdcdc; font-size: 21px; letter-spacing: .4px; overflow: hidden; }
.node { height: 55px; display: flex; align-items: center; color: #333; white-space: nowrap; }
.parent { padding-left: 12px; }
.child { padding-left: 58px; }
.caret { width: 0; height: 0; border: 6.500px solid transparent; border-top: 9px solid #333; border-bottom: 0; margin-right: 8px; }
.ico { fill: #111; }
.parent .ico { width: 21px; height: 20px; margin-right: 12px; }
.child .ico { width: 22px; height: 22px; margin-right: 9px; }
.parent .ico-db { width: 18px; height: 19px; margin: 0 13px 0 2px; }
.child .ico-db { width: 19px; height: 19px; margin: 0 11px 0 1px; }
.active { background: #eaeaea; color: #000; }
.vscroll { width: 21px; background: #f1f1f1; display: flex; flex-direction: column; align-items: center; }
.sb-up { width: 0; height: 0; margin-top: 10px; border: 4.500px solid transparent; border-top: 0; border-bottom: 5px solid #a3a3a3; }
.sb-thumb { width: 17px; height: 637px; margin-top: 7px; background: #c1c1c1; }
.sb-down { width: 0; height: 0; margin-top: 162px; border: 4.500px solid transparent; border-bottom: 0; border-top: 5px solid #505050; }

.content { flex: 1; background: #f3f3f3; }
.panel-top { background: #fff; height: 113px; padding: 12px 10px 0 12px; }
.page-head { height: 42px; display: flex; align-items: center; border-left: 1px solid #555; border-bottom: 1px solid #555; padding-left: 4px; }
.page-ico { width: 32px; height: 36px; }
.page-title { margin: 0 0 0 11px; font-size: 27px; font-weight: 700; color: #333; letter-spacing: .3px; padding-bottom: 4px; }
.page-sub { margin-left: 10px; font-size: 20px; color: #444; letter-spacing: .02px; padding-bottom: 2px; }
.actions { display: flex; justify-content: space-between; align-items: flex-start; margin: 20px 0 0 -2px; }
.create { width: 200px; height: 31px; background: #f3f3f3; border: 1px solid #ccc; border-radius: 4px; display: flex; align-items: center; gap: 6px; padding: 0 0 0 5px; font-size: 20px; font-weight: 700; color: #555; }
.create-i { width: 20px; height: 20px; }
.create-t { padding-bottom: 2px; letter-spacing: .12px; }
.filter { width: 250px; height: 34px; margin-top: -1px; border: 1px solid #ddd; border-radius: 4px; display: flex; align-items: center; padding: 0 0 2px 5px; background: #fff; }
.filter-i { width: 20px; height: 22px; }
.filter-ph { margin-left: 6px; font-size: 20px; color: #777; }

/* grid */
.grid { width: 1545px; table-layout: fixed; border-collapse: collapse; font-size: 20px; }
.c-ico { width: 44px; } .c-name { width: 364px; } .c-type { width: 124px; } .c-format { width: 125px; } .c-status { width: 365px; } .c-url { width: 125px; } .c-health { width: 212px; } .c-iq { width: 150px; } .c-go { width: 36px; }
.grid th { height: 42px; padding: 0 13px 4px; text-align: left; font-weight: 700; color: #666; background: #f3f3f3; border-top: 1px solid #c4c4c4; border-bottom: 1px solid #c4c4c4; box-shadow: inset 1px 0 0 #c8c8c8; white-space: nowrap; overflow: hidden; }
.grid th:first-child { box-shadow: none; }
.grid th.ctr { text-align: center; padding: 0 4px 4px; }
.sort { display: inline-block; width: 12px; height: 16px; vertical-align: -2px; }
.grid td { height: 44px; padding: 6px 13px 0; vertical-align: top; line-height: 24px; color: #333; background: #fff; white-space: nowrap; }
.grid tr:nth-child(even) td { background: #f9f9f9; }
.grid tr.tall td { height: 46px; }
.grid tr.short td { height: 43px; }
.grid td.ctr { text-align: center; padding-left: 2px; padding-right: 0; }
.grid td.ctr svg { margin-left: auto; margin-right: auto; }
.rowico { width: 20px; height: 20px; margin-top: 5px; }
.rowdb { width: 18px; height: 19px; margin-left: 1px; }
.copy { display: flex; align-items: center; gap: 5px; width: 72px; height: 27px; margin-top: 3px; padding: 0 0 0 9px; background: #efefef; border: 1px solid #767676; border-radius: 3px; font: 16px "Liberation Sans", sans-serif; color: #000; }
.clip { width: 13px; height: 17px; }
.ban { width: 20px; height: 20px; margin-top: 3px; }
.chev { width: 10px; height: 14px; margin-top: 6px; }
.analyze { width: 95px; height: 30px; margin: 3px 0 0 -2px; background: #2876c4; border: 0; border-radius: 3px; color: #fff; font-size: 20px; font-weight: 700; letter-spacing: .3px; padding: 0 0 2px; }

/* taskbar */
.taskbar { height: 9px; background: #1b1e26; display: flex; overflow: hidden; }
.task-a { width: 56px; margin-left: 186px; background: #3d3d3d; }
.task-b { width: 5px; background: #2b2d33; margin-left: 0; }
.clock { margin-left: 1540px; font: 14px/14px "Liberation Sans", sans-serif; color: #fff; padding-top: 6px; height: 20px; }

/* overlays */
.tooltip { position: absolute; left: 241px; top: 313px; width: 195px; height: 44px; background: #fdf8ec; border: 1px solid #f0c36d; border-radius: 3px; font-size: 20px; letter-spacing: .05px; line-height: 42px; color: #111; padding-left: 7px; white-space: nowrap; }
.usbwidget { position: absolute; left: 1885px; top: 300px; width: 35px; height: 53px; background: #3b3b3b; border-radius: 3px 0 0 3px; display: flex; align-items: center; padding-left: 9px; }
.usbwidget svg { width: 18px; height: 27px; }
.marks { position: absolute; left: 0; top: 0; width: 1920px; height: 1039px; pointer-events: none; }
```
